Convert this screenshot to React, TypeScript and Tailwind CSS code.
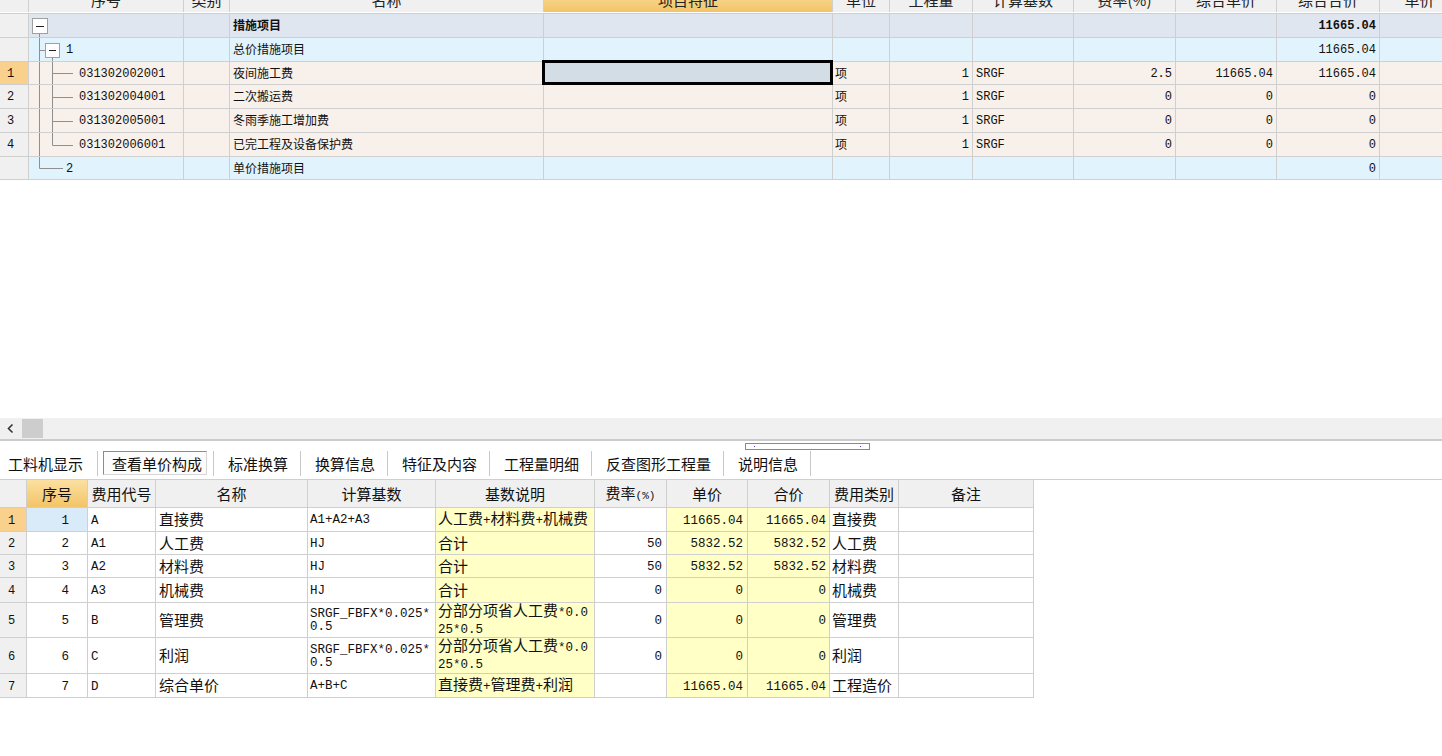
import React from "react";

const cjk = "font-['Noto_Sans_CJK_SC',sans-serif]";
const mono = "font-['Liberation_Mono','Noto_Sans_CJK_SC',monospace]";

type TopRow = {
  kind: "root" | "group1" | "item" | "group2";
  h: number;
  rn?: string;
  code?: string;
  name: string;
  unit?: string;
  qty?: string;
  base?: string;
  rate?: string;
  price?: string;
  total?: string;
  last?: boolean;
  selected?: boolean;
};

const topRows: TopRow[] = [
  { kind: "root", h: 24, name: "措施项目", total: "11665.04" },
  { kind: "group1", h: 24, code: "1", name: "总价措施项目", total: "11665.04" },
  { kind: "item", h: 23, rn: "1", code: "031302002001", name: "夜间施工费", unit: "项", qty: "1", base: "SRGF", rate: "2.5", price: "11665.04", total: "11665.04", selected: true },
  { kind: "item", h: 24, rn: "2", code: "031302004001", name: "二次搬运费", unit: "项", qty: "1", base: "SRGF", rate: "0", price: "0", total: "0" },
  { kind: "item", h: 24, rn: "3", code: "031302005001", name: "冬雨季施工增加费", unit: "项", qty: "1", base: "SRGF", rate: "0", price: "0", total: "0" },
  { kind: "item", h: 24, rn: "4", code: "031302006001", name: "已完工程及设备保护费", unit: "项", qty: "1", base: "SRGF", rate: "0", price: "0", total: "0", last: true },
  { kind: "group2", h: 23, code: "2", name: "单价措施项目", total: "0" },
];

const rowBg = {
  root: "bg-[#dfe6ef]",
  group1: "bg-[#e1f3fd]",
  group2: "bg-[#e1f3fd]",
  item: "bg-[#f8f0ea]",
};

function TreeLines({ row }: { row: TopRow }) {
  const h = row.h - 1;
  const m = Math.round(h / 2) + 0.5;
  const line = "#8f8f8f";
  if (row.kind === "root") {
    return (
      <svg width="40" height={h} className="shrink-0">
        <rect x="3.5" y="4.5" width="15" height="15" fill="#fff" stroke="#a0a0a0" />
        <line x1="7" y1="12.5" x2="15" y2="12.5" stroke="#222" />
        <line x1="10.5" y1="19.5" x2="10.5" y2={h} stroke={line} />
      </svg>
    );
  }
  if (row.kind === "group1") {
    return (
      <svg width="37" height={h} className="shrink-0">
        <line x1="10.5" y1="0" x2="10.5" y2={h} stroke={line} />
        <line x1="10.5" y1="12.5" x2="16" y2="12.5" stroke={line} />
        <rect x="16.5" y="5.5" width="14" height="14" fill="#fff" stroke="#a0a0a0" />
        <line x1="20" y1="12.5" x2="27" y2="12.5" stroke="#222" />
        <line x1="23.5" y1="19.5" x2="23.5" y2={h} stroke={line} />
      </svg>
    );
  }
  if (row.kind === "item") {
    return (
      <svg width="50" height={h} className="shrink-0">
        <line x1="10.5" y1="0" x2="10.5" y2={h} stroke={line} />
        <line x1="23.5" y1="0" x2="23.5" y2={row.last ? m : h} stroke={line} />
        <line x1="23.5" y1={m} x2="44" y2={m} stroke={line} />
      </svg>
    );
  }
  return (
    <svg width="37" height={h} className="shrink-0">
      <line x1="10.5" y1="0" x2="10.5" y2={m} stroke={line} />
      <line x1="10.5" y1={m} x2="34" y2={m} stroke={line} />
    </svg>
  );
}

const topCols = [
  { label: "", w: "w-[29px]" },
  { label: "序号", w: "w-[155px]" },
  { label: "类别", w: "w-[46px]" },
  { label: "名称", w: "w-[314px]" },
  { label: "项目特征", w: "w-[289px]", active: true },
  { label: "单位", w: "w-[57px]" },
  { label: "工程量", w: "w-[83px]" },
  { label: "计算基数", w: "w-[101px]" },
  { label: "费率(%)", w: "w-[102px]" },
  { label: "综合单价", w: "w-[101px]" },
  { label: "综合合价", w: "w-[103px]" },
  { label: "单价", w: "w-[80px]" },
];

const cell = "h-full shrink-0 border-r border-[#cfcfcf] flex items-center";

function TopTable() {
  return (
    <div className="w-full overflow-hidden">
      <div className="h-[14px] overflow-hidden border-b border-[#cfcfcf]">
        <div className="flex h-[24px] -mt-[12px] bg-[#f0f0f0]">
          {topCols.map((c, i) => (
            <div
              key={i}
              className={`${cell} ${c.w} justify-center text-[15px] text-[#222] ${cjk} ${
                c.active ? "bg-linear-to-b from-[#fbe0a0] to-[#f3c466]" : ""
              }`}
            >
              {c.label}
            </div>
          ))}
        </div>
      </div>
      {topRows.map((r, i) => (
        <div
          key={i}
          className={`flex border-b border-[#cfcfcf] ${rowBg[r.kind]} text-[12px] leading-[16px] text-[#111]`}
          style={{ height: r.h }}
        >
          <div
            className={`${cell} w-[29px] pl-[7px] pt-[1px] ${mono} ${
              r.selected ? "bg-[#f9d18c]" : "bg-[#f0f0f0]"
            }`}
          >
            {r.rn}
          </div>
          <div className={`${cell} w-[155px] ${mono}`}>
            <TreeLines row={r} />
            <span className="pt-[1px]">{r.code}</span>
          </div>
          <div className={`${cell} w-[46px]`} />
          <div className={`${cell} w-[314px] pl-[3px] pb-[1px] ${cjk} ${r.kind === "root" ? "font-bold" : ""}`}>
            {r.name}
          </div>
          <div className={`${cell} w-[289px] relative`}>
            {r.selected && (
              <div className="absolute -left-[2px] -top-[2px] -right-[1px] -bottom-[1px] border-[3px] border-black bg-[#d3dde6]" />
            )}
          </div>
          <div className={`${cell} w-[57px] pl-[2px] pb-[1px] ${cjk}`}>{r.unit}</div>
          <div className={`${cell} w-[83px] justify-end pr-[3px] pt-[1px] ${mono}`}>{r.qty}</div>
          <div className={`${cell} w-[101px] pl-[3px] pt-[1px] ${mono}`}>{r.base}</div>
          <div className={`${cell} w-[102px] justify-end pr-[3px] pt-[1px] ${mono}`}>{r.rate}</div>
          <div className={`${cell} w-[101px] justify-end pr-[3px] pt-[1px] ${mono}`}>{r.price}</div>
          <div
            className={`${cell} w-[103px] justify-end pr-[3px] pt-[1px] ${mono} ${
              r.kind === "root" ? "font-bold" : ""
            }`}
          >
            {r.total}
          </div>
          <div className={`${cell} w-[80px]`} />
        </div>
      ))}
    </div>
  );
}

const tabs = ["工料机显示", "查看单价构成", "标准换算", "换算信息", "特征及内容", "工程量明细", "反查图形工程量", "说明信息"];

function TabBar() {
  return (
    <div className={`relative h-[39px] pt-[6px] border-b border-[#cfcfcf] bg-white flex items-center text-[15px] text-[#111] ${cjk}`}>
      <div className="absolute left-[745px] top-[2px] w-[125px] h-[7px] border border-[#8a8a8a] bg-white">
        <div className="absolute left-[8px] top-[2px] w-px h-px bg-[#4040c0]" />
        <div className="absolute right-[8px] top-[2px] w-px h-px bg-[#4040c0]" />
      </div>
      {tabs.map((t, i) => (
        <React.Fragment key={t}>
          {i === 0 ? (
            <div className="pl-[8px] pr-[14px] leading-none">{t}</div>
          ) : i === 1 ? (
            <div className="ml-[5px] mr-[6px] h-[24px] flex items-center pl-[8px] pr-[4px] border border-t-[#8c8c8c] border-l-[#8c8c8c] border-r-[#d6d6d6] border-b-[#d6d6d6] bg-[#fcfcfc] leading-none">
              {t}
            </div>
          ) : (
            <div className="pl-[14px] pr-[12px] leading-none">{t}</div>
          )}
          <div className="w-px h-[25px] bg-[#c8c8c8]" />
        </React.Fragment>
      ))}
    </div>
  );
}

type BotRow = {
  h: number;
  no: string;
  code: string;
  name: string;
  base: string[];
  desc: string[];
  rate: string;
  price: string;
  total: string;
  type: string;
};

const botRows: BotRow[] = [
  { h: 24, no: "1", code: "A", name: "直接费", base: ["A1+A2+A3"], desc: ["人工费+材料费+机械费"], rate: "", price: "11665.04", total: "11665.04", type: "直接费" },
  { h: 23, no: "2", code: "A1", name: "人工费", base: ["HJ"], desc: ["合计"], rate: "50", price: "5832.52", total: "5832.52", type: "人工费" },
  { h: 23, no: "3", code: "A2", name: "材料费", base: ["HJ"], desc: ["合计"], rate: "50", price: "5832.52", total: "5832.52", type: "材料费" },
  { h: 25, no: "4", code: "A3", name: "机械费", base: ["HJ"], desc: ["合计"], rate: "0", price: "0", total: "0", type: "机械费" },
  { h: 35, no: "5", code: "B", name: "管理费", base: ["SRGF_FBFX*0.025*", "0.5"], desc: ["分部分项省人工费*0.0", "25*0.5"], rate: "0", price: "0", total: "0", type: "管理费" },
  { h: 36, no: "6", code: "C", name: "利润", base: ["SRGF_FBFX*0.025*", "0.5"], desc: ["分部分项省人工费*0.0", "25*0.5"], rate: "0", price: "0", total: "0", type: "利润" },
  { h: 24, no: "7", code: "D", name: "综合单价", base: ["A+B+C"], desc: ["直接费+管理费+利润"], rate: "", price: "11665.04", total: "11665.04", type: "工程造价" },
];

function Mixed({ text }: { text: string }) {
  const parts = text.split(/([\x00-\x7f]+)/).filter((p) => p !== "");
  return (
    <>
      {parts.map((p, i) =>
        /^[\x00-\x7f]+$/.test(p) ? (
          <span key={i} className={`${mono} text-[12.5px]`}>
            {p}
          </span>
        ) : (
          <span key={i}>{p}</span>
        )
      )}
    </>
  );
}

const botCols = [
  { label: "", w: "w-[27px]" },
  { label: "序号", w: "w-[61px]", active: true },
  { label: "费用代号", w: "w-[68px]" },
  { label: "名称", w: "w-[152px]" },
  { label: "计算基数", w: "w-[128px]" },
  { label: "基数说明", w: "w-[159px]" },
  { label: "费率(%)", w: "w-[72px]" },
  { label: "单价", w: "w-[81px]" },
  { label: "合价", w: "w-[82px]" },
  { label: "费用类别", w: "w-[69px]" },
  { label: "备注", w: "w-[135px]" },
];

function BottomTable() {
  const yellow = "bg-[#ffffc6]";
  return (
    <div className={`w-[1034px] border-r border-[#cfcfcf] ${cjk} text-[15px] text-[#111]`}>
      <div className="flex h-[28px] border-b border-[#cfcfcf] bg-[#f0f0f0]">
        {botCols.map((c, i) => (
          <div
            key={i}
            className={`${cell} ${c.w} justify-center leading-none ${
              c.active ? "bg-linear-to-b from-[#fbe0a0] to-[#f3c466]" : ""
            }`}
          >
            {c.label === "费率(%)" ? (
              <span>
                费率<span className={`${mono} text-[11px]`}>(%)</span>
              </span>
            ) : (
              c.label
            )}
          </div>
        ))}
      </div>
      {botRows.map((r, i) => (
        <div
          key={i}
          className="flex border-b border-[#cfcfcf] bg-white leading-[16px]"
          style={{ height: r.h }}
        >
          <div
            className={`${cell} w-[27px] pl-[8px] pt-[2px] text-[12px] ${mono} ${
              i === 0 ? "bg-[#f9d18c]" : "bg-[#f0f0f0]"
            }`}
          >
            {r.no}
          </div>
          <div
            className={`${cell} w-[61px] justify-end pr-[18px] pt-[2px] text-[12.5px] ${mono} ${
              i === 0 ? "bg-[#d9eaf8]" : ""
            }`}
          >
            {r.no}
          </div>
          <div className={`${cell} w-[68px] pl-[3px] pt-[2px] text-[12.5px] ${mono}`}>{r.code}</div>
          <div className={`${cell} w-[152px] pl-[3px] pb-[1px]`}>{r.name}</div>
          <div className={`${cell} w-[128px] pl-[2px] pt-[2px] flex-col !items-start justify-center text-[12.5px] leading-[13px] ${mono}`}>
            {r.base.map((b, j) => (
              <div key={j}>{b}</div>
            ))}
          </div>
          <div className={`${cell} w-[159px] pl-[2px] pb-[1px] flex-col !items-start justify-center ${yellow} ${r.desc.length > 1 ? "leading-[13px]" : ""}`}>
            {r.desc.map((d, j) => (
              <div key={j} className="whitespace-nowrap">
                <Mixed text={d} />
              </div>
            ))}
          </div>
          <div className={`${cell} w-[72px] justify-end pr-[4px] pt-[2px] text-[12.5px] ${mono}`}>{r.rate}</div>
          <div className={`${cell} w-[81px] justify-end pr-[4px] pt-[2px] text-[12.5px] ${mono} ${yellow}`}>{r.price}</div>
          <div className={`${cell} w-[82px] justify-end pr-[3px] pt-[2px] text-[12.5px] ${mono} ${yellow}`}>{r.total}</div>
          <div className={`${cell} w-[69px] pl-[2px] pb-[1px]`}>{r.type}</div>
          <div className={`${cell} w-[135px] border-r-0`} />
        </div>
      ))}
    </div>
  );
}

export default function App() {
  return (
    <div className={`w-[1442px] h-[756px] overflow-hidden bg-white ${cjk}`}>
      <div className="h-[418px]">
        <TopTable />
      </div>
      <div className="h-[23px] bg-[#f0f0f0] border-b-2 border-[#cccccc] flex items-center">
        <svg width="22" height="21" className="shrink-0">
          <path d="M12.5 6.5 L8.5 10.5 L12.5 14.5" fill="none" stroke="#333" strokeWidth="1.6" />
        </svg>
        <div className="w-[21px] h-[19px] bg-[#cdcdcd]" />
      </div>
      <TabBar />
      <BottomTable />
    </div>
  );
}
